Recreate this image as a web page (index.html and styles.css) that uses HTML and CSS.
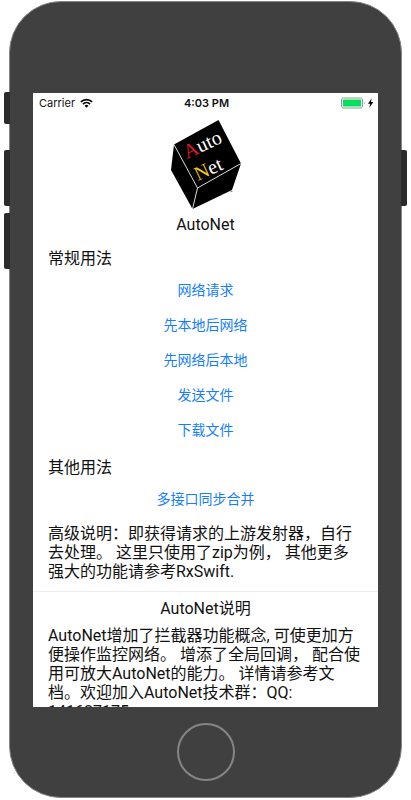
FILE: index.html
```html
<!DOCTYPE html>
<html lang="zh-CN">
<head>
<meta charset="utf-8">
<meta name="viewport" content="width=device-width, initial-scale=1">
<title>AutoNet</title>
<link rel="stylesheet" href="styles.css">
</head>
<body>
<div class="phone">
  <span class="key key-mute"></span>
  <span class="key key-up"></span>
  <span class="key key-down"></span>
  <span class="key key-power"></span>
  <main class="screen">
    <header class="status">
      <div class="carrier">
        <span>Carrier</span>
        <svg class="wifi" viewBox="0 0 13 10" aria-hidden="true">
          <path d="M.9 3.9a8 8 0 0 1 11.2 0M3 6.1a5 5 0 0 1 7 0" fill="none" stroke="#000" stroke-width="1.8"/>
          <path d="M4.6 7.7a2.7 2.7 0 0 1 3.8 0L6.500 9.700z"/>
        </svg>
      </div>
      <time class="clock">4:03 PM</time>
      <svg class="battery" viewBox="0 0 33 12" aria-hidden="true">
        <rect x=".5" y="1" width="21" height="10" rx="2" fill="#fff" stroke="#8b9c90"/>
        <rect x="2" y="2.500" width="18" height="7" rx=".5" fill="#04e05e"/>
        <path d="M23 4.300q1.500 1.700 0 3.400z" fill="#a89090"/>
        <path d="M30.800 1.200 27 6.700h2.200l-.9 4.100 4-5.700H30z"/>
      </svg>
    </header>
    <svg class="logo" viewBox="0 0 100 100" role="img" aria-label="AutoNet">
      <path d="M62.500 7 85 50.500 76 77 36.500 96 15 57 18 31.500z"/>
      <path d="M18 31.500 41.500 75 85 50.500M41.500 75 36.500 96" fill="none" stroke="#ddd"/>
      <g class="logo-text">
        <text transform="translate(31 46) rotate(-25)"><tspan fill="#e0182d">A</tspan>uto</text>
        <text transform="translate(42 68) rotate(-25)"><tspan fill="#f5c518">N</tspan>et</text>
      </g>
      <path d="M74.500 78.500h2" stroke="#888"/>
    </svg>
    <h1 class="title">AutoNet</h1>
    <section class="group">
      <h2 class="heading">常规用法</h2>
      <nav class="links">
        <button type="button">网络请求</button>
        <button type="button">先本地后网络</button>
        <button type="button">先网络后本地</button>
        <button type="button">发送文件</button>
        <button type="button">下载文件</button>
      </nav>
    </section>
    <section class="group">
      <h2 class="heading">其他用法</h2>
      <nav class="links">
        <button type="button">多接口同步合并</button>
      </nav>
      <p class="note">高级说明：即获得请求的上游发射器，自行<br>去处理。 这里只使用了zip为例， 其他更多<br>强大的功能请参考RxSwift.</p>
    </section>
    <section class="about">
      <h2 class="title">AutoNet说明</h2>
      <p class="note">AutoNet增加了拦截器功能概念, 可使更加方<br>便操作监控网络。 增添了全局回调， 配合使<br>用可放大AutoNet的能力。 详情请参考文<br>档。欢迎加入AutoNet技术群：QQ:<br>141627175</p>
    </section>
  </main>
  <button class="home" type="button" aria-label="Home"></button>
</div>
</body>
</html>
```
FILE: styles.css
```css
* {
  box-sizing: border-box;
}

body {
  margin: 0;
  background: #fff;
  color: #111;
  font-family: Roboto, "Noto Sans CJK SC", sans-serif;
  font-size: 16px;
}

.phone {
  position: relative;
  display: flex;
  flex-direction: column;
  height: calc(100vh - 3px);
  margin: 1px 9px 2px;
  padding: 91px 23px 16px;
  background: #404040;
  border: 1px solid #858585;
  border-radius: 52px;
}

.key {
  position: absolute;
  left: -6px;
  width: 6px;
  height: 56px;
  background: #2b2b2b;
  border-radius: 2px 0 0 2px;
}

.key-mute {
  top: 90px;
  height: 32px;
}

.key-up {
  top: 148px;
}

.key-down {
  top: 211px;
}

.key-power {
  top: 148px;
  right: -6px;
  left: auto;
  border-radius: 0 2px 2px 0;
}

.screen {
  flex: 1;
  min-height: 0;
  overflow: hidden;
  background: #fff;
}

.status {
  display: grid;
  grid-template-columns: 1fr auto 1fr;
  align-items: center;
  height: 20px;
  padding: 0 4px 0 6px;
  font-family: Inter, sans-serif;
  font-size: 11px;
}

.carrier {
  display: flex;
  align-items: center;
  gap: 5px;
}

.wifi {
  width: 13px;
  height: 10px;
}

.clock {
  font-weight: 600;
}

.battery {
  justify-self: end;
  width: 33px;
  height: 12px;
}

.logo {
  display: block;
  width: 100px;
  height: 100px;
  margin: 0 auto;
}

.logo-text {
  fill: #fff;
  font-family: "Liberation Serif", serif;
  font-size: 20px;
}

.title,
.heading {
  margin: 0;
  font-size: 16px;
  font-weight: 400;
  line-height: 24px;
}

.title {
  text-align: center;
}

.group {
  padding: 10px 15px 0;
}

.links {
  display: flex;
  flex-direction: column;
  align-items: center;
}

.links button {
  height: 35px;
  padding: 0;
  background: none;
  border: 0;
  color: #147efb;
  font-family: inherit;
  font-size: 14px;
}

.note {
  margin: 9px 0 10px;
  line-height: 19px;
  white-space: nowrap;
}

.about {
  padding: 5px 15px 0;
  border-top: 1px solid #eee;
}

.about .note {
  margin: 5px 0;
}

.home {
  flex: none;
  width: 58px;
  height: 58px;
  margin: 16px auto 0;
  padding: 0;
  background: none;
  border: 2px solid #858585;
  border-radius: 50%;
}
```
